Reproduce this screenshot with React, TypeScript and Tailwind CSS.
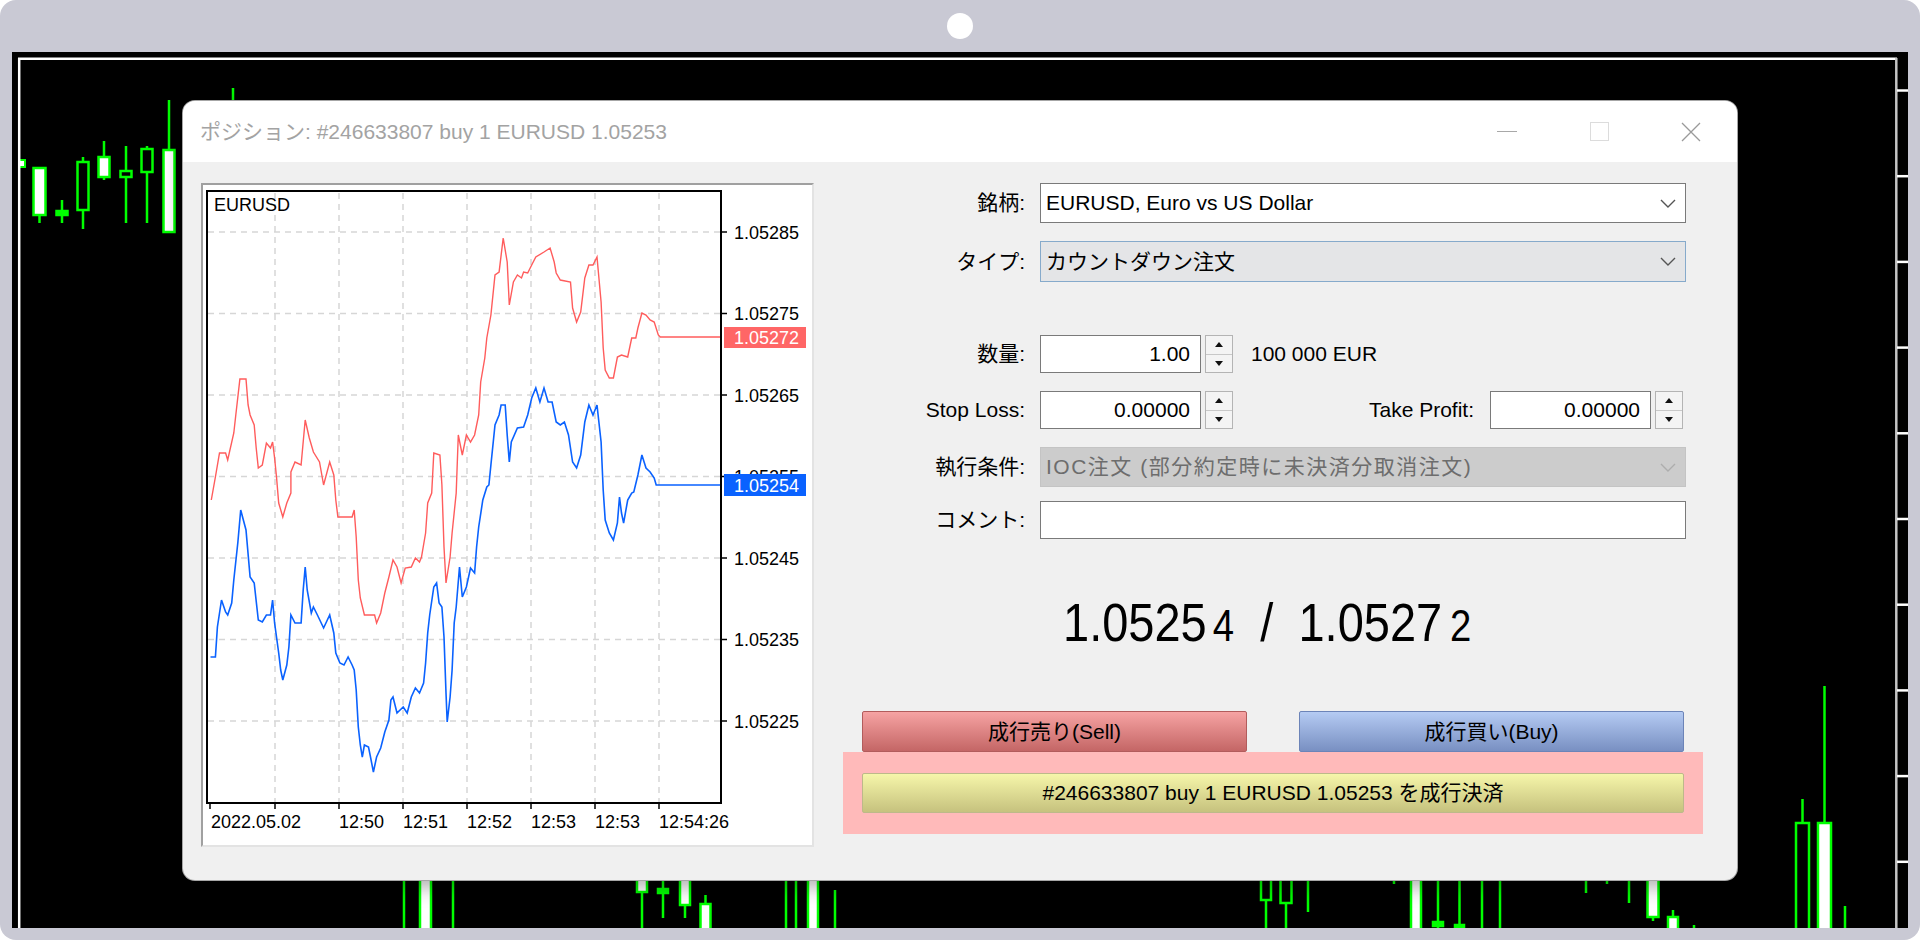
import React from 'react';

const G = '#00ff00';

// chart traces: [x in zoom units, y in page px]; x = 195 + zx / 2.45
const RED: number[][] = [
  [40,500],[50,477],[60,453],[75,453],[80,460],[95,433],[100,415],[110,379],[125,379],[130,405],[135,415],[145,425],[150,448],[155,468],[165,465],[175,443],[185,448],[190,442],[195,458],[200,478],[205,503],[215,517],[225,503],[235,493],[235,472],[245,462],[260,465],[270,420],[280,438],[290,452],[305,462],[315,485],[330,462],[340,475],[345,500],[350,517],[385,517],[390,510],[395,537],[400,580],[405,598],[415,615],[440,615],[445,623],[455,613],[465,593],[475,577],[485,560],[495,567],[505,583],[515,568],[530,567],[540,558],[550,562],[555,557],[565,533],[570,503],[580,493],[585,453],[600,455],[605,485],[610,547],[615,583],[625,557],[630,533],[640,493],[645,435],[655,455],[665,435],[675,442],[685,435],[695,415],[700,382],[710,358],[715,338],[725,315],[735,275],[745,272],[755,238],[765,262],[770,305],[780,282],[790,275],[800,278],[805,272],[815,273],[825,265],[835,257],[855,252],[870,248],[880,262],[885,273],[895,280],[920,282],[925,308],[935,322],[945,312],[955,278],[965,265],[975,265],[985,257],[995,302],[1000,348],[1005,370],[1015,378],[1025,378],[1035,357],[1045,355],[1060,357],[1070,338],[1080,338],[1085,328],[1095,313],[1105,315],[1115,320],[1125,322],[1135,335],[1140,337],[1290,337],
];

const BLUE: number[][] = [
  [38,657],[50,657],[55,627],[65,600],[75,612],[80,615],[90,603],[95,580],[105,542],[112,510],[125,530],[135,577],[145,583],[155,620],[165,622],[175,615],[185,615],[190,600],[195,623],[205,653],[210,670],[215,680],[225,665],[230,647],[235,615],[245,623],[260,623],[265,590],[270,567],[275,590],[285,613],[290,607],[300,615],[315,628],[330,615],[340,633],[345,653],[355,663],[365,665],[375,657],[385,665],[390,670],[395,690],[400,727],[405,745],[410,757],[415,745],[425,747],[430,757],[437,772],[445,757],[455,748],[465,732],[475,720],[480,700],[485,697],[495,713],[510,707],[520,713],[530,697],[540,688],[550,693],[560,683],[565,663],[570,633],[575,615],[585,587],[592,583],[598,603],[605,607],[610,637],[615,693],[618,722],[625,697],[630,670],[635,623],[640,607],[648,567],[655,597],[665,587],[675,568],[685,573],[690,547],[695,527],[705,500],[715,487],[720,485],[725,465],[735,425],[745,415],[750,405],[760,405],[765,435],[770,462],[775,442],[790,428],[805,427],[815,415],[825,398],[835,388],[845,402],[855,388],[865,402],[875,402],[885,422],[895,425],[905,422],[915,435],[925,462],[935,468],[945,455],[955,422],[965,405],[975,415],[985,405],[995,442],[1000,490],[1005,520],[1015,533],[1025,540],[1035,523],[1040,497],[1045,513],[1050,523],[1060,500],[1070,493],[1075,492],[1085,475],[1095,455],[1105,468],[1115,472],[1125,478],[1130,485],[1290,485],
];

const toPts = (arr: number[][]) =>
  arr.map(([zx, y]) => `${(195 + zx / 2.45).toFixed(1)},${y}`).join(' ');

const LEVELS = ['1.05285', '1.05275', '1.05265', '1.05255', '1.05245', '1.05235', '1.05225'];
const VGRID = [275, 339, 403, 467, 531, 595, 659];
const TIMES: [number, string][] = [
  [211, '2022.05.02'], [339, '12:50'], [403, '12:51'], [467, '12:52'], [531, '12:53'], [595, '12:53'], [659, '12:54:26'],
];

type C = { x: number; w?: number; bt: number; bb: number; wt: number; wb: number; fill: string };

const CANDLES: C[] = [
  // upper left
  { x: 39.5, w: 12, bt: 168, bb: 215, wt: 215, wb: 223, fill: '#fff' },
  { x: 62, w: 11, bt: 211, bb: 215, wt: 200, wb: 223, fill: G },
  { x: 83, w: 11, bt: 162, bb: 210, wt: 157, wb: 229, fill: '#000' },
  { x: 104, w: 11, bt: 157, bb: 177, wt: 141, wb: 180, fill: '#fff' },
  { x: 126, w: 11, bt: 171, bb: 177, wt: 146, wb: 223, fill: '#000' },
  { x: 147, w: 11, bt: 149, bb: 172, wt: 146, wb: 223, fill: '#000' },
  { x: 169, w: 11, bt: 150, bb: 232, wt: 100, wb: 232, fill: '#fff' },
  // below the dialog
  { x: 425.5, w: 11, bt: 870, bb: 935, wt: 870, wb: 935, fill: '#fff' },
  { x: 642, w: 10, bt: 870, bb: 892, wt: 870, wb: 935, fill: '#fff' },
  { x: 663, w: 10, bt: 889, bb: 893, wt: 870, wb: 918, fill: G },
  { x: 685, w: 10, bt: 870, bb: 905, wt: 870, wb: 918, fill: '#fff' },
  { x: 705.5, w: 10, bt: 904, bb: 935, wt: 895, wb: 935, fill: '#fff' },
  { x: 813, w: 10, bt: 870, bb: 935, wt: 870, wb: 935, fill: '#fff' },
  { x: 1266, w: 10, bt: 870, bb: 900, wt: 870, wb: 935, fill: '#000' },
  { x: 1286, w: 11, bt: 870, bb: 903, wt: 870, wb: 935, fill: '#000' },
  { x: 1416, w: 10, bt: 870, bb: 935, wt: 870, wb: 935, fill: '#fff' },
  { x: 1438, w: 10, bt: 922, bb: 926, wt: 870, wb: 935, fill: G },
  { x: 1459.5, w: 9, bt: 925, bb: 935, wt: 870, wb: 935, fill: G },
  { x: 1653, w: 11, bt: 870, bb: 917, wt: 870, wb: 921, fill: '#fff' },
  { x: 1673, w: 10, bt: 917, bb: 935, wt: 910, wb: 935, fill: '#fff' },
  // right of the dialog
  { x: 1802.5, w: 13, bt: 823, bb: 935, wt: 799, wb: 935, fill: '#000' },
  { x: 1824.5, w: 13, bt: 823, bb: 935, wt: 686, wb: 935, fill: '#fff' },
];

const WICKS: [number, number, number][] = [
  [233, 88, 101], [404, 870, 935], [453, 870, 935], [786, 870, 935], [796, 870, 935], [835, 890, 935],
  [1308, 870, 912], [1394, 870, 884], [1482, 870, 935], [1500, 870, 935], [1586, 870, 893],
  [1607, 870, 884], [1629, 870, 903], [1694, 925, 935], [1845, 906, 935],
];

function Screen() {
  const ticks = Array.from({ length: 10 }, (_, i) => 90.5 + i * 85.7);
  return (
    <svg className="absolute inset-0" width={1896} height={876} viewBox="12 52 1896 876">
      {WICKS.map(([x, a, b], i) => (
        <line key={i} x1={x} x2={x} y1={a} y2={b} stroke={G} strokeWidth={2.5} />
      ))}
      {CANDLES.map((c, i) => {
        const w = c.w ?? 12;
        return (
          <g key={i}>
            <line x1={c.x} x2={c.x} y1={c.wt} y2={c.wb} stroke={G} strokeWidth={2.5} />
            <rect x={c.x - w / 2} y={c.bt} width={w} height={Math.max(c.bb - c.bt, 1)} fill={c.fill} stroke={G} strokeWidth={2.5} />
          </g>
        );
      })}
      <rect x={19} y={160} width={6} height={7} fill="#fff" stroke={G} strokeWidth={2} />
      <line x1={18} x2={1897} y1={58.7} y2={58.7} stroke="#fff" strokeWidth={2.5} />
      <line x1={19.2} x2={19.2} y1={58} y2={935} stroke="#fff" strokeWidth={2.5} />
      <line x1={1896.3} x2={1896.3} y1={58} y2={935} stroke="#c4c4c4" strokeWidth={2.5} />
      {ticks.map((y, i) => (
        <line key={i} x1={1897} x2={1908} y1={y} y2={y} stroke="#fff" strokeWidth={2.5} />
      ))}
    </svg>
  );
}

function ChartPanel() {
  const F = '"Liberation Sans", Arial, sans-serif';
  return (
    <div className="ml-[18px] mt-[21px] w-[613px] h-[664px] shrink-0 bg-white border-2 border-t-[#a0a0a0] border-l-[#a0a0a0] border-b-[#e3e3e3] border-r-[#e3e3e3]">
      <svg width={609} height={660} viewBox="203 185 609 660" className="block">
        <defs>
          <clipPath id="plotclip">
            <rect x={208} y={192} width={512} height={610} />
          </clipPath>
        </defs>
        {LEVELS.map((_, i) => {
          const y = 232 + i * 81.5;
          return <line key={i} x1={208} x2={720} y1={y} y2={y} stroke="#d6d6d6" strokeWidth={1.5} strokeDasharray="6 5" />;
        })}
        {VGRID.map((x) => (
          <line key={x} x1={x} x2={x} y1={193} y2={802} stroke="#d6d6d6" strokeWidth={1.5} strokeDasharray="6 5" />
        ))}
        <g clipPath="url(#plotclip)" fill="none" strokeLinejoin="miter">
          <polyline points={toPts(RED)} stroke="#ff5c5c" strokeWidth={1.4} />
          <polyline points={toPts(BLUE)} stroke="#0a62ff" strokeWidth={1.6} />
        </g>
        <rect x={207} y={191} width={514} height={612} fill="none" stroke="#000" strokeWidth={2} />
        {LEVELS.map((_, i) => {
          const y = 232 + i * 81.5;
          return <line key={i} x1={721} x2={727} y1={y} y2={y} stroke="#000" strokeWidth={1.5} />;
        })}
        {[210, ...VGRID].map((x) => (
          <line key={x} x1={x} x2={x} y1={803} y2={809} stroke="#000" strokeWidth={1.5} />
        ))}
        {LEVELS.map((l, i) => (
          <text key={l} x={734} y={232 + i * 81.5 + 6.5} fontFamily={F} fontSize={18} fill="#000">{l}</text>
        ))}
        {TIMES.map(([x, t], i) => (
          <text key={i} x={x} y={827.5} fontFamily={F} fontSize={18} fill="#000">{t}</text>
        ))}
        <rect x={724} y={327} width={82} height={21} fill="#ff6666" />
        <text x={734} y={344} fontFamily={F} fontSize={18} fill="#fff">1.05272</text>
        <rect x={724} y={474} width={82} height={22} fill="#0a62ff" />
        <text x={734} y={491.5} fontFamily={F} fontSize={18} fill="#fff">1.05254</text>
        <text x={214} y={211} fontFamily={F} fontSize={18} fill="#000">EURUSD</text>
      </svg>
    </div>
  );
}

function Chevron({ color = '#555' }: { color?: string }) {
  return (
    <svg width="16" height="9" viewBox="0 0 16 9" className="ml-auto shrink-0">
      <path d="M1 1 L8 8 L15 1" fill="none" stroke={color} strokeWidth="1.4" />
    </svg>
  );
}

function Spinner() {
  return (
    <div className="ml-[4px] w-[28px] h-[38px] flex flex-col border border-[#b4b4b4] bg-[#f4f4f4]">
      <div className="flex-1 flex items-center justify-center border-b border-[#c8c8c8]">
        <svg width="8" height="5" viewBox="0 0 8 5"><path d="M4 0 L8 5 L0 5 Z" fill="#111" /></svg>
      </div>
      <div className="flex-1 flex items-center justify-center">
        <svg width="8" height="5" viewBox="0 0 8 5"><path d="M0 0 L8 0 L4 5 Z" fill="#111" /></svg>
      </div>
    </div>
  );
}

function Label({ children }: { children: React.ReactNode }) {
  return <div className="w-[182px] shrink-0 text-right mr-[15px] whitespace-nowrap">{children}</div>;
}

function NumBox({ value }: { value: string }) {
  return (
    <div className="w-[161px] h-[38px] border border-[#7a7a7a] bg-white flex items-center justify-end pr-[10px]">{value}</div>
  );
}

function Form() {
  return (
    <div className="ml-[29px] mt-[21px] w-[860px] text-[21px] text-black">
      <div className="flex items-center h-[40px]">
        <Label>銘柄:</Label>
        <div className="w-[646px] h-[40px] border border-[#7a7a7a] bg-white flex items-center pl-[5px] pr-[9px]">
          <span>EURUSD, Euro vs US Dollar</span>
          <Chevron />
        </div>
      </div>
      <div className="flex items-center h-[41px] mt-[18px]">
        <Label>タイプ:</Label>
        <div className="w-[646px] h-[41px] border border-[#86aacb] bg-[#e4e5e7] flex items-center pl-[5px] pr-[9px]">
          <span>カウントダウン注文</span>
          <Chevron />
        </div>
      </div>
      <div className="flex items-center h-[38px] mt-[53px]">
        <Label>数量:</Label>
        <NumBox value="1.00" />
        <Spinner />
        <span className="ml-[18px]">100 000 EUR</span>
      </div>
      <div className="flex items-center h-[38px] mt-[18px]">
        <Label>Stop Loss:</Label>
        <NumBox value="0.00000" />
        <Spinner />
        <div className="w-[241px] text-right mr-[16px]">Take Profit:</div>
        <NumBox value="0.00000" />
        <Spinner />
      </div>
      <div className="flex items-center h-[40px] mt-[18px]">
        <Label>執行条件:</Label>
        <div className="w-[646px] h-[40px] border border-[#c4c4c4] bg-[#cccccc] text-[#6d6d6d] flex items-center pl-[5px] pr-[9px]">
          <span className="tracking-[1.5px]">IOC注文 (部分約定時に未決済分取消注文)</span>
          <Chevron color="#adadad" />
        </div>
      </div>
      <div className="flex items-center h-[38px] mt-[14px]">
        <Label>コメント:</Label>
        <div className="w-[646px] h-[38px] border border-[#7a7a7a] bg-white" />
      </div>
      <div className="mt-[56px] h-[54px] pl-[220px]">
        <div className="inline-block origin-left scale-x-[0.87] text-[54px] leading-none whitespace-nowrap text-black">
          <span>1.0525</span>
          <span className="text-[44px] ml-[7px]">4</span>
          <span className="ml-[30px]">/</span>
          <span className="ml-[29px]">1.0527</span>
          <span className="text-[44px] ml-[9px]">2</span>
        </div>
      </div>
      <div className="mt-[62px] flex pl-[19px]">
        <div className="w-[385px] h-[41px] rounded-[2px] border border-[#b25c5c] bg-gradient-to-b from-[#f6a3a3] to-[#c46666] flex items-center justify-center">
          成行売り(Sell)
        </div>
        <div className="ml-[52px] w-[385px] h-[41px] rounded-[2px] border border-[#6c84b8] bg-gradient-to-b from-[#b5cbf3] to-[#7990c2] flex items-center justify-center">
          成行買い(Buy)
        </div>
      </div>
      <div className="h-[82px] bg-[#ffbaba] pt-[21px] pl-[19px]">
        <div className="w-[822px] h-[40px] rounded-[2px] border border-[#bdb98a] bg-gradient-to-b from-[#f6f6aa] to-[#c6c27e] flex items-center justify-center">
          #246633807 buy 1 EURUSD 1.05253 を成行決済
        </div>
      </div>
    </div>
  );
}

function Dialog() {
  return (
    <div className="absolute left-[171px] top-[49px] w-[1554px] h-[779px] rounded-[12px] overflow-hidden bg-[#f0f0f0] shadow-[0_0_0_1px_#a6a6a6,0_6px_20px_rgba(0,0,0,0.35)] flex flex-col">
      <div className="h-[61px] shrink-0 bg-white flex items-center">
        <div className="flex-1 pl-[17px] text-[21px] text-[#a3a3a3] whitespace-nowrap">
          ポジション: #246633807 buy 1 EURUSD 1.05253
        </div>
        <div className="flex h-full">
          <div className="w-[92px] h-full flex items-center justify-center">
            <div className="w-[20px] h-px bg-[#a8a8a8]" />
          </div>
          <div className="w-[92px] h-full flex items-center justify-center">
            <div className="w-[19px] h-[19px] border border-[#dcdcdc]" />
          </div>
          <div className="w-[92px] h-full flex items-center justify-center">
            <svg width="20" height="20" viewBox="0 0 20 20">
              <path d="M1 1 L19 19 M19 1 L1 19" stroke="#9a9a9a" strokeWidth="1.3" fill="none" />
            </svg>
          </div>
        </div>
      </div>
      <div className="flex items-start flex-1">
        <ChartPanel />
        <Form />
      </div>
    </div>
  );
}

export default function App() {
  return (
    <div className="w-[1920px] h-[940px] bg-white overflow-hidden font-['Liberation_Sans','Noto_Sans_CJK_JP',sans-serif]">
      <div className="w-full h-full rounded-[16px] bg-[#c9c9d4] flex flex-col">
        <div className="h-[52px] shrink-0 flex items-center justify-center">
          <div className="w-[26px] h-[26px] rounded-full bg-white" />
        </div>
        <div className="relative mx-[12px] h-[876px] bg-black overflow-hidden">
          <Screen />
          <Dialog />
        </div>
      </div>
    </div>
  );
}
